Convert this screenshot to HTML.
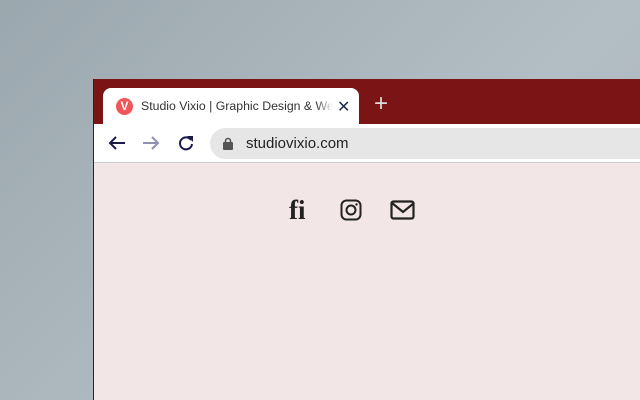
<!DOCTYPE html><html><head><style>
html,body{margin:0;width:640px;height:400px;overflow:hidden}
body{background:linear-gradient(135deg,#9ba7ae,#b3bec4 60%,#aab5bb);font-family:"Liberation Sans",sans-serif;position:relative}
.win{position:absolute;left:93px;top:79px;width:560px;height:321px;background:#7a1415;border-left:1px solid #5a1010;overflow:hidden}
.tab{position:absolute;left:9px;top:9px;width:256px;height:37px;background:#fff;border-radius:8px 8px 0 0}
.tb{position:absolute;left:0;top:45px;right:0;height:38px;background:#fff;border-bottom:1px solid #ccc}
.content{position:absolute;left:0;top:84px;right:0;bottom:0;background:#f3e6e6}
.addr{position:absolute;left:116px;top:4px;width:460px;height:31px;background:#e6e6e6;border-radius:16px}
</style></head><body>
<div class="win">
<div class="tab">
<div style="position:absolute;left:13px;top:10px;width:17px;height:17px;border-radius:50%;background:#f0555a;color:#fff;font-size:12px;font-weight:bold;text-align:center;line-height:17px">V</div>
<div style="position:absolute;left:38px;top:11px;font-size:12.3px;color:#333;white-space:nowrap;width:195px;overflow:hidden">Studio Vixio | Graphic Design &amp; Web</div>
<div style="position:absolute;left:213px;top:8px;width:20px;height:22px;background:linear-gradient(90deg,rgba(255,255,255,0),#fff 85%)"></div>
<div style="position:absolute;left:234px;top:9px;font-size:16px;color:#1b2a4a">✕</div>
</div>
<div style="position:absolute;left:280px;top:13px;font-size:24px;color:#ddd;line-height:24px">+</div>
<div class="tb">
<svg style="position:absolute;left:14px;top:11px" width="18" height="16"><path d="M17 8H2M8 2L2 8l6 6" stroke="#1b1b4a" stroke-width="2" fill="none"/></svg>
<svg style="position:absolute;left:48px;top:11px" width="18" height="16"><path d="M1 8h15M10 2l6 6-6 6" stroke="#9090b0" stroke-width="2" fill="none"/></svg>
<svg style="position:absolute;left:83px;top:10px" width="18" height="18"><path d="M14 6A6 6 0 1 0 15 10" stroke="#1b1b4a" stroke-width="2" fill="none"/><path d="M10 2h6v6z" fill="#1b1b4a"/></svg>
<div class="addr">
<svg style="position:absolute;left:13px;top:9px" width="10" height="13"><rect x="0" y="5" width="10" height="8" rx="1" fill="#555"/><path d="M2.5 6V4a2.5 2.5 0 0 1 5 0v2" stroke="#555" stroke-width="1.6" fill="none"/></svg>
<div style="position:absolute;left:36px;top:7px;font-size:15px;color:#222">studiovixio.com</div>
</div>
</div>
<div class="content">
<div style="position:absolute;left:195px;top:32px;font-family:'Liberation Serif',serif;font-weight:bold;font-size:27px;color:#222">fi</div>
<svg style="position:absolute;left:246px;top:36px" width="22" height="22"><rect x="1.5" y="1.5" width="19" height="19" rx="5" stroke="#222" stroke-width="2" fill="none"/><circle cx="11" cy="11" r="4.5" stroke="#222" stroke-width="2" fill="none"/><circle cx="16.5" cy="5.5" r="1.2" fill="#222"/></svg>
<svg style="position:absolute;left:296px;top:37px" width="26" height="20"><rect x="1.5" y="1.5" width="22" height="17" rx="2" stroke="#222" stroke-width="2.2" fill="none"/><path d="M2 3l11 9 11-9" stroke="#222" stroke-width="2.2" fill="none"/></svg>
</div>
</div>
</body></html>
